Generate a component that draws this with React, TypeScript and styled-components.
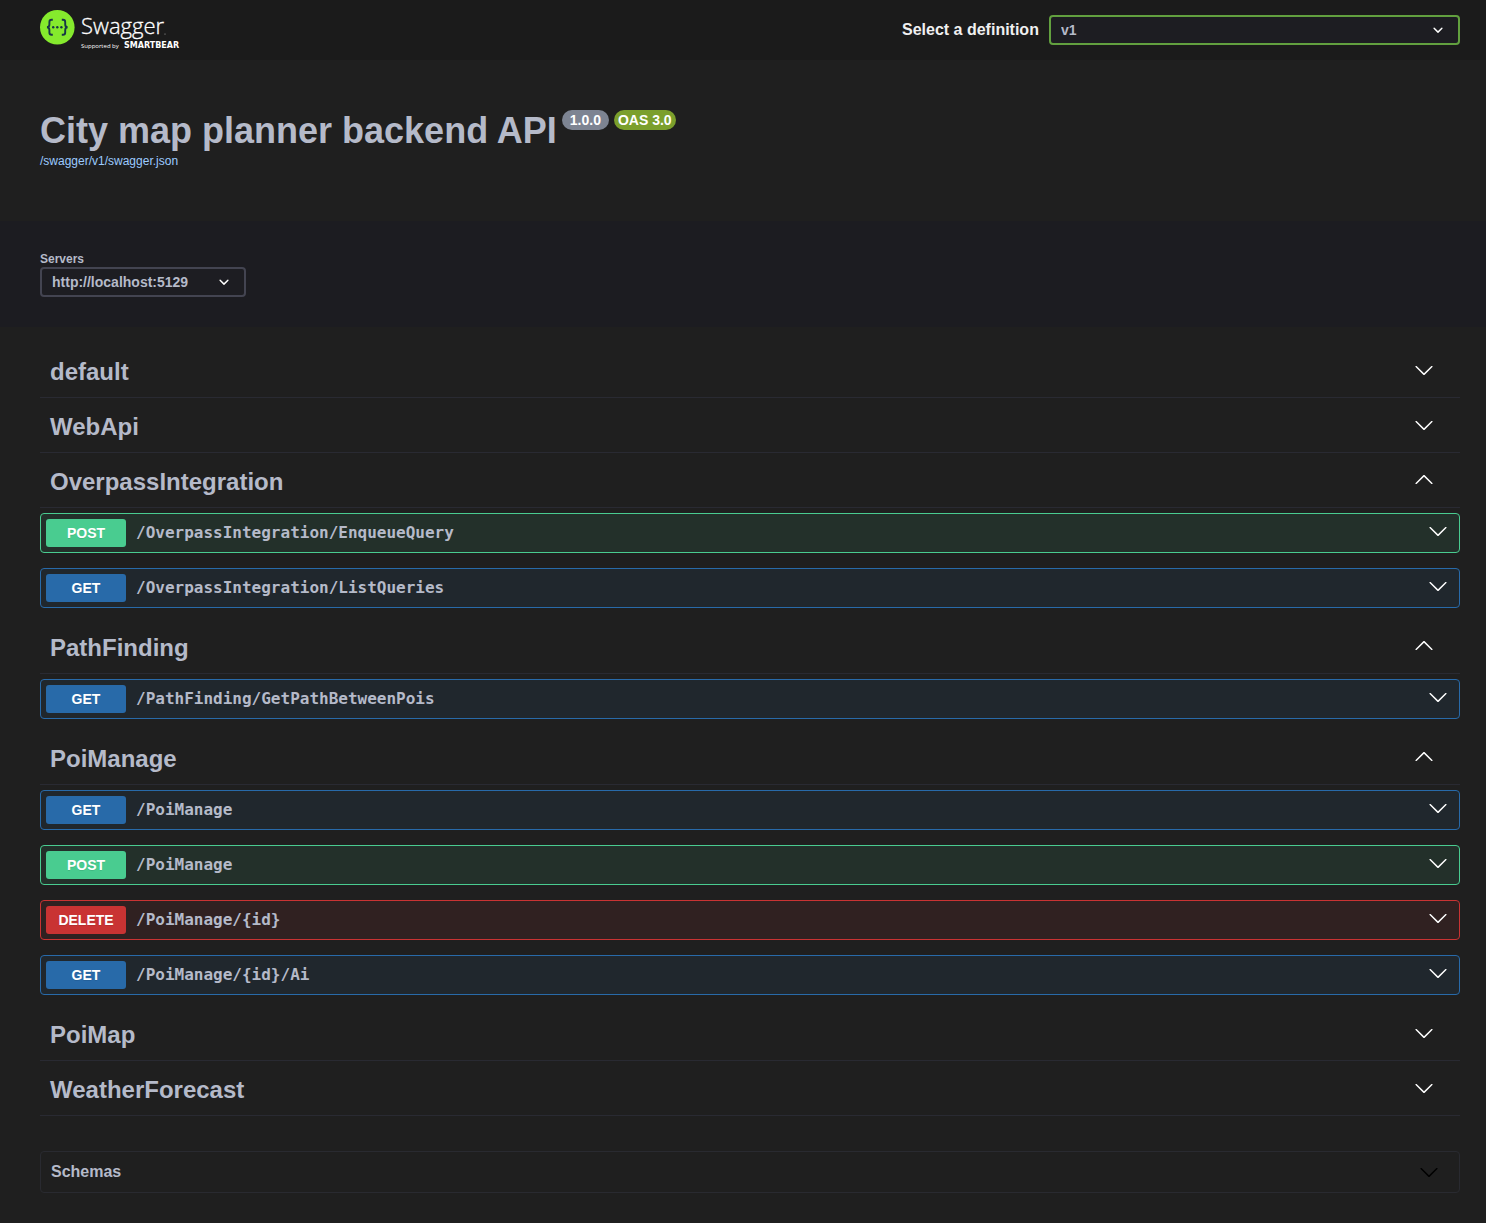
import React, { useState } from "react";
import styled, { createGlobalStyle } from "styled-components";

const sans = `"Liberation Sans", Arial, Helvetica, sans-serif`;
const mono = `"DejaVu Sans Mono", Menlo, monospace`;

type Method = "GET" | "POST" | "DELETE";

const methodColors: Record<Method, { solid: string; tint: string }> = {
  GET: { solid: "#286aa9", tint: "#20272d" },
  POST: { solid: "#49cc90", tint: "#23302a" },
  DELETE: { solid: "#c93333", tint: "#302121" },
};

interface Operation {
  method: Method;
  path: string;
}

interface Tag {
  name: string;
  open: boolean;
  operations: Operation[];
}

const tags: Tag[] = [
  { name: "default", open: false, operations: [] },
  { name: "WebApi", open: false, operations: [] },
  {
    name: "OverpassIntegration",
    open: true,
    operations: [
      { method: "POST", path: "/OverpassIntegration/EnqueueQuery" },
      { method: "GET", path: "/OverpassIntegration/ListQueries" },
    ],
  },
  {
    name: "PathFinding",
    open: true,
    operations: [{ method: "GET", path: "/PathFinding/GetPathBetweenPois" }],
  },
  {
    name: "PoiManage",
    open: true,
    operations: [
      { method: "GET", path: "/PoiManage" },
      { method: "POST", path: "/PoiManage" },
      { method: "DELETE", path: "/PoiManage/{id}" },
      { method: "GET", path: "/PoiManage/{id}/Ai" },
    ],
  },
  { name: "PoiMap", open: false, operations: [] },
  { name: "WeatherForecast", open: false, operations: [] },
];

const GlobalStyle = createGlobalStyle`
  *, *::before, *::after { box-sizing: border-box; }
  body {
    margin: 0;
    background: #1f1f1f;
    color: #b5bac9;
    font-family: ${sans};
  }
`;

const Page = styled.div`
  min-height: 100vh;
  padding-bottom: 30px;
`;

const TopBar = styled.header`
  display: flex;
  align-items: center;
  justify-content: space-between;
  height: 60px;
  padding: 0 26px 0 40px;
  background: #1b1b1b;
`;

const LogoLink = styled.a`
  display: block;
  height: 40px;
`;

const DefinitionField = styled.div`
  display: flex;
  align-items: center;
  gap: 10px;
  width: 40%;
  max-width: 558px;
`;

const DefinitionLabel = styled.label`
  flex: none;
  color: #f0f0f0;
  font-size: 16px;
  line-height: 20px;
  font-weight: 700;
`;

const SelectWrap = styled.div<{ $grow?: boolean }>`
  position: relative;
  display: flex;
  ${(p) => (p.$grow ? "flex: 1;" : "align-self: flex-start;")}
`;

const Select = styled.select<{ $accent?: boolean }>`
  appearance: none;
  width: 100%;
  height: 30px;
  padding: 0 55px 0 10px;
  border: 2px solid ${(p) => (p.$accent ? "#62a03f" : "#434451")};
  border-radius: 4px;
  background: #1d1d22;
  color: #b5bac9;
  font-family: ${sans};
  font-size: 14px;
  font-weight: 700;
`;

const SelectArrow = styled.svg`
  position: absolute;
  top: 5px;
  right: 12px;
  width: 20px;
  height: 20px;
  fill: #fff;
  pointer-events: none;
`;

const Info = styled.section`
  display: flex;
  flex-direction: column;
  align-items: flex-start;
  min-height: 161px;
  padding: 50px 26px 50px 40px;
`;

const TitleRow = styled.div`
  display: flex;
  align-items: flex-start;
  gap: 5px;
`;

const Title = styled.h1`
  margin: 0;
  font-size: 36px;
  line-height: 42px;
  font-weight: 700;
`;

const Badges = styled.div`
  display: flex;
  gap: 5px;
`;

const Badge = styled.span<{ $color: string; $pad: number }>`
  height: 20px;
  padding: 0 ${(p) => p.$pad}px;
  border-radius: 10px;
  background: ${(p) => p.$color};
  color: #fff;
  font-size: 14px;
  line-height: 20px;
  font-weight: 700;
`;

const SpecLink = styled.a`
  color: #9ccbff;
  font-size: 12px;
  line-height: 18px;
  text-decoration: none;
`;

const Servers = styled.section`
  display: flex;
  flex-direction: column;
  padding: 30px 26px 30px 40px;
  background: #1c1c21;
`;

const ServersLabel = styled.label`
  font-size: 12px;
  line-height: 16px;
  font-weight: 700;
`;

const Content = styled.main`
  padding: 16px 26px 0 40px;
`;

const TagHeading = styled.h2`
  margin: 0;
  font-size: 24px;
`;

const TagButton = styled.button`
  display: flex;
  align-items: center;
  justify-content: space-between;
  width: 100%;
  height: 55px;
  padding: 0 26px 0 10px;
  border: 0;
  border-bottom: 1px solid #292a32;
  background: none;
  color: #b5bac9;
  font-family: ${sans};
  font-size: 24px;
  line-height: 30px;
  font-weight: 700;
  text-align: left;
  cursor: pointer;
`;

const TagName = styled.span`
  padding-top: 4px;
`;

const Operations = styled.div`
  display: flex;
  flex-direction: column;
  gap: 15px;
  padding: 5px 0 11px;
`;

const OperationRow = styled.button<{ $method: Method }>`
  display: flex;
  align-items: center;
  gap: 10px;
  width: 100%;
  height: 40px;
  padding: 5px 11px 5px 5px;
  border: 1px solid ${(p) => methodColors[p.$method].solid};
  border-radius: 4px;
  background: ${(p) => methodColors[p.$method].tint};
  text-align: left;
  cursor: pointer;
`;

const MethodBadge = styled.span<{ $method: Method }>`
  flex: none;
  width: 80px;
  border-radius: 3px;
  background: ${(p) => methodColors[p.$method].solid};
  color: #fff;
  font-family: ${sans};
  font-size: 14px;
  line-height: 28px;
  font-weight: 700;
  text-align: center;
  text-shadow: 0 1px 0 rgba(0, 0, 0, 0.1);
`;

const Path = styled.span`
  flex: 1;
  color: #b5bac9;
  font-family: ${mono};
  font-size: 16px;
  line-height: 20px;
  font-weight: 700;
`;

const Chevron = styled.svg<{ $up?: boolean; $raised?: boolean; $color?: string }>`
  flex: none;
  width: 20px;
  height: 20px;
  margin-bottom: ${(p) => (p.$raised ? 4 : 0)}px;
  fill: ${(p) => p.$color ?? "#fff"};
  transform: ${(p) => (p.$up ? "rotate(180deg)" : "none")};
`;

const SchemasHeading = styled.h2`
  margin: 35px 0 0;
  font-size: 16px;
`;

const SchemasButton = styled.button`
  display: flex;
  align-items: center;
  justify-content: space-between;
  width: 100%;
  height: 42px;
  padding: 0 20px 0 10px;
  border: 1px solid #292a30;
  border-radius: 4px;
  background: none;
  color: #b5bac9;
  font-family: ${sans};
  font-size: 16px;
  line-height: 20px;
  font-weight: 700;
  cursor: pointer;
`;

const largeArrow =
  "M17.418 6.109c.272-.268.709-.268.979 0s.271.701 0 .969l-7.908 7.83c-.27.268-.707.268-.979 0l-7.908-7.83c-.27-.268-.27-.701 0-.969.271-.268.709-.268.979 0L10 13.25l7.418-7.141z";
const smallArrow =
  "M13.418 7.859a.695.695 0 01.978 0 .68.68 0 010 .969l-3.908 3.83a.697.697 0 01-.979 0l-3.908-3.83a.68.68 0 010-.969.695.695 0 01.978 0L10 11l3.418-3.141z";

function Arrow(props: { up?: boolean; raised?: boolean; color?: string }) {
  return (
    <Chevron viewBox="0 0 20 20" aria-hidden="true" $up={props.up} $raised={props.raised} $color={props.color}>
      <path d={largeArrow} />
    </Chevron>
  );
}

function SmallArrow() {
  return (
    <SelectArrow viewBox="0 0 20 20" aria-hidden="true">
      <path d={smallArrow} />
    </SelectArrow>
  );
}

function Logo() {
  return (
    <svg width="150" height="40" viewBox="0 0 150 40" role="img" aria-label="Swagger">
      <circle cx="17.3" cy="17.3" r="17.3" fill="#85ea2d" />
      <g fill="none" stroke="#173647" strokeWidth="1.9">
        <path d="M12.8 9.8h-1.2c-1.6 0-2.2.8-2.2 2.3v2.4c0 1.8-.6 2.7-2.4 2.8 1.8.1 2.4 1 2.4 2.8v2.4c0 1.5.6 2.3 2.2 2.3h1.2" />
        <path d="M21.8 9.8h1.2c1.6 0 2.2.8 2.2 2.3v2.4c0 1.8.6 2.7 2.4 2.8-1.8.1-2.4 1-2.4 2.8v2.4c0 1.5-.6 2.3-2.2 2.3h-1.2" />
      </g>
      <g fill="#173647">
        <circle cx="13.2" cy="17.3" r="1.2" />
        <circle cx="17.3" cy="17.3" r="1.2" />
        <circle cx="21.4" cy="17.3" r="1.2" />
      </g>
      <g fill="#fff" fontFamily="'Open Sans', 'Noto Sans', sans-serif">
        <text x="41" y="24" fontSize="22" fontWeight="300" stroke="#fff" strokeWidth="0.3">
          Swagger
        </text>
        <text x="41" y="38" fontSize="6">
          Supported by
        </text>
        <text x="84" y="38" fontSize="8" fontWeight="700" fontFamily="'DejaVu Sans', sans-serif">
          SMARTBEAR
        </text>
      </g>
      <circle cx="125" cy="24" r="0.6" fill="#aaa" />
    </svg>
  );
}

function TagSection({ tag }: { tag: Tag }) {
  const [open, setOpen] = useState(tag.open);
  return (
    <section>
      <TagHeading>
        <TagButton type="button" aria-expanded={open} onClick={() => setOpen(!open)}>
          <TagName>{tag.name}</TagName>
          <Arrow up={open} />
        </TagButton>
      </TagHeading>
      {open && tag.operations.length > 0 && (
        <Operations>
          {tag.operations.map((op) => (
            <OperationRow type="button" key={op.method + op.path} $method={op.method}>
              <MethodBadge $method={op.method}>{op.method}</MethodBadge>
              <Path>{op.path}</Path>
              <Arrow raised />
            </OperationRow>
          ))}
        </Operations>
      )}
    </section>
  );
}

export default function App() {
  return (
    <Page>
      <GlobalStyle />
      <TopBar>
        <LogoLink href="#">
          <Logo />
        </LogoLink>
        <DefinitionField>
          <DefinitionLabel htmlFor="definition">Select a definition</DefinitionLabel>
          <SelectWrap $grow>
            <Select id="definition" $accent>
              <option>v1</option>
            </Select>
            <SmallArrow />
          </SelectWrap>
        </DefinitionField>
      </TopBar>

      <Info>
        <TitleRow>
          <Title>City map planner backend API</Title>
          <Badges>
            <Badge $color="#7d8492" $pad={8}>1.0.0</Badge>
            <Badge $color="#7b9f2c" $pad={4}>OAS 3.0</Badge>
          </Badges>
        </TitleRow>
        <SpecLink href="#swagger.json">/swagger/v1/swagger.json</SpecLink>
      </Info>

      <Servers>
        <ServersLabel htmlFor="servers">Servers</ServersLabel>
        <SelectWrap>
          <Select id="servers">
            <option>http://localhost:5129</option>
          </Select>
          <SmallArrow />
        </SelectWrap>
      </Servers>

      <Content>
        {tags.map((tag) => (
          <TagSection key={tag.name} tag={tag} />
        ))}
        <SchemasHeading>
          <SchemasButton type="button" aria-expanded={false}>
            Schemas
            <Arrow color="#000" />
          </SchemasButton>
        </SchemasHeading>
      </Content>
    </Page>
  );
}
